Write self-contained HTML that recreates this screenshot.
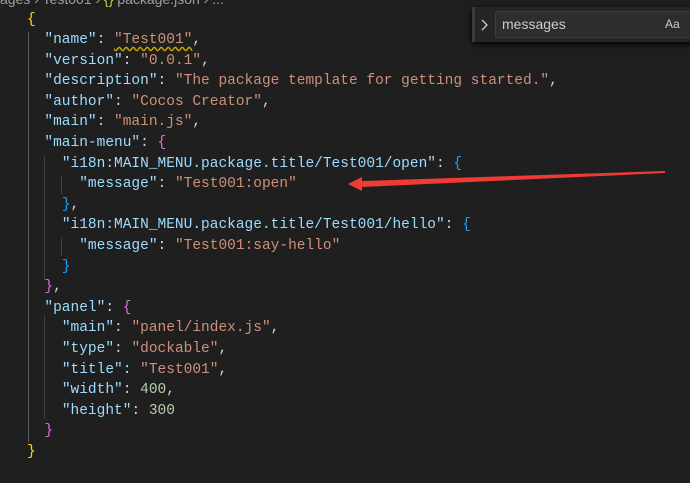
<!DOCTYPE html>
<html><head><meta charset="utf-8"><style>
html,body{margin:0;padding:0;background:#1f1f1f;width:690px;height:483px;overflow:hidden;position:relative}
.code{position:absolute;left:27px;top:9.5px;font:14.5px/20.6px "Liberation Mono",monospace;color:#d4d4d4;white-space:pre;margin:0}
.k{color:#9cdcfe}.s{color:#ce9178}.n{color:#b5cea8}.y{color:#ffd700}.p{color:#da70d6}.b{color:#179fff}
.g{position:absolute;width:1px;background:#404040}
.crumb{position:absolute;left:0;top:-9px;font:14px "Liberation Sans",sans-serif;color:#a0a0a0;white-space:pre}
.find{position:absolute;left:472px;top:7px;width:230px;height:35px;background:#252526;box-shadow:0 2px 6px #000;border-left:3px solid #3a3a3a}
.inp{position:absolute;left:20px;top:4px;width:220px;height:25px;background:#2d2d2d;border:1px solid #3c3c3c;border-radius:2px;font:14px "Liberation Sans",sans-serif;color:#cccccc}
.sq{text-decoration:underline wavy #cca700;text-underline-offset:3px}
</style></head><body>
<div class="crumb">ages › Test001 › <span style="color:#cbcb41">{}</span> package.json › ...</div>
<div class="g" style="left:28px;top:32px;height:410px;background:#5a5a5a"></div>
<div class="g" style="left:44px;top:156px;height:124px"></div>
<div class="g" style="left:61px;top:176px;height:18px"></div>
<div class="g" style="left:61px;top:238px;height:18px"></div>
<div class="g" style="left:44px;top:315px;height:104px"></div>
<pre class="code"><span class="y">{</span>
  <span class="k">"name"</span>: <span class="s sq">"Test001"</span>,
  <span class="k">"version"</span>: <span class="s">"0.0.1"</span>,
  <span class="k">"description"</span>: <span class="s">"The package template for getting started."</span>,
  <span class="k">"author"</span>: <span class="s">"Cocos Creator"</span>,
  <span class="k">"main"</span>: <span class="s">"main.js"</span>,
  <span class="k">"main-menu"</span>: <span class="p">{</span>
    <span class="k">"i18n:MAIN_MENU.package.title/Test001/open"</span>: <span class="b">{</span>
      <span class="k">"message"</span>: <span class="s">"Test001:open"</span>
    <span class="b">}</span>,
    <span class="k">"i18n:MAIN_MENU.package.title/Test001/hello"</span>: <span class="b">{</span>
      <span class="k">"message"</span>: <span class="s">"Test001:say-hello"</span>
    <span class="b">}</span>
  <span class="p">}</span>,
  <span class="k">"panel"</span>: <span class="p">{</span>
    <span class="k">"main"</span>: <span class="s">"panel/index.js"</span>,
    <span class="k">"type"</span>: <span class="s">"dockable"</span>,
    <span class="k">"title"</span>: <span class="s">"Test001"</span>,
    <span class="k">"width"</span>: <span class="n">400</span>,
    <span class="k">"height"</span>: <span class="n">300</span>
  <span class="p">}</span>
<span class="y">}</span></pre>
<div class="find">
  <svg style="position:absolute;left:5px;top:11px" width="10" height="14" viewBox="0 0 10 14"><path d="M2 2 L7 7 L2 12" stroke="#ccc" stroke-width="1.3" fill="none"/></svg>
  <div class="inp"><span style="position:absolute;left:6px;top:4px">messages</span><span style="position:absolute;left:169px;top:5px;font-size:12px">Aa</span></div>
</div>
<svg style="position:absolute;left:0;top:0" width="690" height="483"><polygon points="665,171 362,181 362,177 348,184 362,191 362,187 665,173" fill="#ee3b36"/></svg>
</body></html>
